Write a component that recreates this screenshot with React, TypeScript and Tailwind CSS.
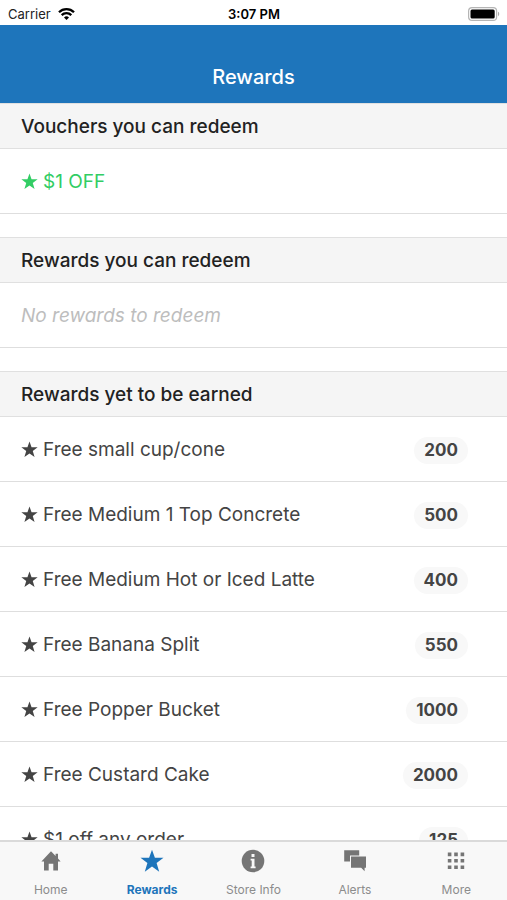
import React from "react";

const STAR = "M12 .8l2.9 8h8.6l-6.9 5.3 2.6 8.6L12 17.6l-7.2 5.1 2.6-8.6L.5 8.8h8.6z";

function Star({ className }: { className: string }) {
  return (
    <svg viewBox="0 0 24 24" className={className} fill="currentColor" aria-hidden="true">
      <path d={STAR} />
    </svg>
  );
}

function StatusBar() {
  return (
    <div className="grid h-[25px] shrink-0 grid-cols-3 items-center bg-white pt-[2px] pr-[7px] pl-2 text-[13px] leading-4 text-[#222]">
      <div className="flex items-center gap-[7px]">
        <span>Carrier</span>
        <svg viewBox="0 0 17 12" className="h-3 w-[17px]" fill="none" stroke="#000" strokeWidth="2.3" aria-label="Wi-Fi">
          <path d="M1 4.3a10.6 10.6 0 0 1 15 0" />
          <path d="M3.7 7.1a6.8 6.8 0 0 1 9.6 0" />
          <path d="M8.5 12L6 9.4a3.6 3.6 0 0 1 5 0z" fill="#000" stroke="none" />
        </svg>
      </div>
      <div className="text-center font-semibold text-black">3:07 PM</div>
      <svg viewBox="0 0 32 14" className="h-[14px] w-8 justify-self-end" aria-label="Battery full">
        <rect x="0.6" y="0.6" width="28" height="12.8" rx="3.5" fill="#fff" stroke="#b5b5b5" strokeWidth="1.2" />
        <rect x="2.5" y="2.5" width="24.2" height="9" rx="1.5" fill="#000" />
        <path d="M30 4.8c1.6.6 1.6 3.8 0 4.4z" fill="#a9a9a9" />
      </svg>
    </div>
  );
}

function SectionHeading({ children }: { children: React.ReactNode }) {
  return (
    <h2 className="flex h-[46px] items-center border-y border-[#e0e0e0] bg-[#f5f5f5] px-[21px] pt-[2px] text-[19px] font-medium text-[#222]">
      {children}
    </h2>
  );
}

const rewards = [
  { name: "Free small cup/cone", points: 200 },
  { name: "Free Medium 1 Top Concrete", points: 500 },
  { name: "Free Medium Hot or Iced Latte", points: 400 },
  { name: "Free Banana Split", points: 550 },
  { name: "Free Popper Bucket", points: 1000 },
  { name: "Free Custard Cake", points: 2000 },
  { name: "$1 off any order", points: 125 },
];

const rowClass =
  "flex h-[65px] items-center gap-[5px] border-b border-[#dedede] pr-[39px] pl-[21px] text-[19px]";

const tabs = [
  {
    label: "Home",
    icon: <path d="M12 2.2L2.4 12.4H5v9.2h4.7v-6.8h4.6v6.8H19v-9.2h2.6L19 9.6V4.8h-2.4v2.3z" />,
  },
  { label: "Rewards", icon: <path d={STAR} /> },
  {
    label: "Store Info",
    icon: (
      <>
        <circle cx="12" cy="12" r="11.3" />
        <path
          d="M10.5 5h3v3h-3zM9.6 9.8h3.9v7.8h1.1v1.6h-5v-1.6h1.1v-6.2H9.6z"
          fill="#f8f8f8"
        />
      </>
    ),
  },
  {
    label: "Alerts",
    icon: (
      <>
        <path d="M1.2 1.2h15v5.2H7v6.2H1.2z" />
        <path d="M8 7.4h15v11.4h-1.4v3.4l-3.4-3.4H8z" />
      </>
    ),
  },
  {
    label: "More",
    icon: (
      <path d="M3.8 3.6h3.6v3.6H3.8zM10.2 3.6h3.6v3.6h-3.6zM16.6 3.6h3.6v3.6h-3.6zM3.8 10h3.6v3.6H3.8zM10.2 10h3.6v3.6h-3.6zM16.6 10h3.6v3.6h-3.6zM3.8 16.4h3.6V20H3.8zM10.2 16.4h3.6V20h-3.6zM16.6 16.4h3.6V20h-3.6z" />
    ),
  },
];

export default function App() {
  return (
    <div className="flex h-screen flex-col bg-white font-['Inter','Liberation_Sans',sans-serif] text-[#444]">
      <StatusBar />
      <header className="flex h-[78px] shrink-0 items-end justify-center bg-[#1e75bb] pb-3">
        <h1 className="text-[20px] leading-7 font-medium text-white">Rewards</h1>
      </header>

      <main className="min-h-0 flex-1 overflow-y-auto [scrollbar-width:none]">
        <section className="mb-[23px]">
          <SectionHeading>Vouchers you can redeem</SectionHeading>
          <div className={rowClass}>
            <Star className="size-[17px] shrink-0 text-[#32cd64]" />
            <span className="pt-[2px] text-[#32cd64]">$1 OFF</span>
          </div>
        </section>

        <section className="mb-[23px]">
          <SectionHeading>Rewards you can redeem</SectionHeading>
          <div className={rowClass}>
            <em className="pt-[2px] text-[#bdbdbd]">No rewards to redeem</em>
          </div>
        </section>

        <section>
          <SectionHeading>Rewards yet to be earned</SectionHeading>
          <ul>
            {rewards.map((r) => (
              <li key={r.name} className={rowClass}>
                <Star className="size-[17px] shrink-0" />
                <span className="flex-1 pt-[2px]">{r.name}</span>
                <span className="mt-[2px] rounded-full bg-[#f8f8f8] px-[10px] text-[17px] leading-[27px] font-bold">
                  {r.points}
                </span>
              </li>
            ))}
          </ul>
        </section>
      </main>

      <nav className="grid h-[60px] shrink-0 grid-cols-5 border-t-2 border-[#dadada] bg-[#f8f8f8]">
        {tabs.map((t) => (
          <button
            key={t.label}
            type="button"
            className={
              t.label === "Rewards"
                ? "flex flex-col items-center gap-[9px] pt-[7px] text-[12px] leading-4 font-bold text-[#1e75bb]"
                : "flex flex-col items-center gap-[9px] pt-[7px] text-[12px] leading-4 text-[#8c8c8c]"
            }
          >
            <svg
              viewBox="0 0 24 24"
              fill="currentColor"
              aria-hidden="true"
              className={t.label === "Rewards" ? "size-6" : "size-6 text-[#757575]"}
            >
              {t.icon}
            </svg>
            {t.label}
          </button>
        ))}
      </nav>
    </div>
  );
}
